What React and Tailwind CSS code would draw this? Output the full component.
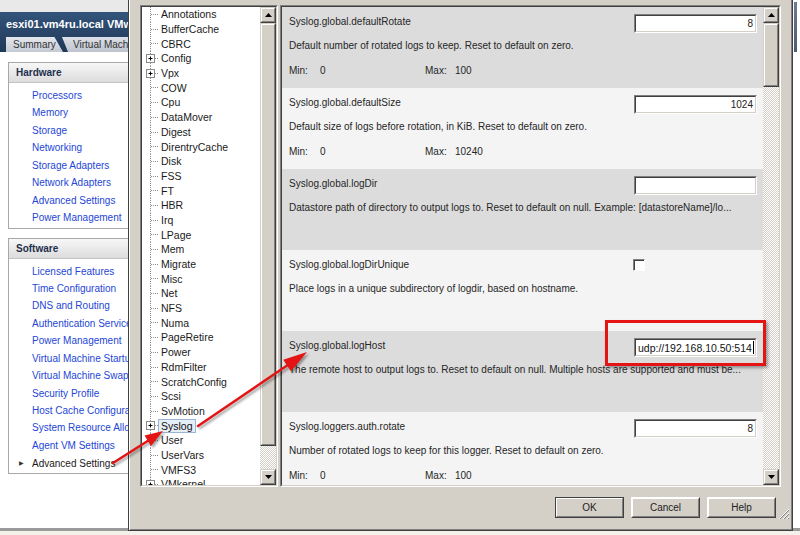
import React from "react";

const hardware = [
  "Processors",
  "Memory",
  "Storage",
  "Networking",
  "Storage Adapters",
  "Network Adapters",
  "Advanced Settings",
  "Power Management",
];

const software = [
  "Licensed Features",
  "Time Configuration",
  "DNS and Routing",
  "Authentication Services",
  "Power Management",
  "Virtual Machine Startup/Shutdown",
  "Virtual Machine Swapfile Location",
  "Security Profile",
  "Host Cache Configuration",
  "System Resource Allocation",
  "Agent VM Settings",
];

const treeItems = [
  ["Annotations"],
  ["BufferCache"],
  ["CBRC"],
  ["Config", true],
  ["Vpx", true],
  ["COW"],
  ["Cpu"],
  ["DataMover"],
  ["Digest"],
  ["DirentryCache"],
  ["Disk"],
  ["FSS"],
  ["FT"],
  ["HBR"],
  ["Irq"],
  ["LPage"],
  ["Mem"],
  ["Migrate"],
  ["Misc"],
  ["Net"],
  ["NFS"],
  ["Numa"],
  ["PageRetire"],
  ["Power"],
  ["RdmFilter"],
  ["ScratchConfig"],
  ["Scsi"],
  ["SvMotion"],
  ["Syslog", true, true],
  ["User"],
  ["UserVars"],
  ["VMFS3"],
  ["VMkernel", true],
];

const settings = [
  {
    name: "Syslog.global.defaultRotate",
    value: "8",
    desc: "Default number of rotated logs to keep. Reset to default on zero.",
    min: "0",
    max: "100",
    dark: true,
  },
  {
    name: "Syslog.global.defaultSize",
    value: "1024",
    desc: "Default size of logs before rotation, in KiB. Reset to default on zero.",
    min: "0",
    max: "10240",
  },
  {
    name: "Syslog.global.logDir",
    value: "",
    desc: "Datastore path of directory to output logs to. Reset to default on null. Example: [datastoreName]/lo...",
    dark: true,
  },
  {
    name: "Syslog.global.logDirUnique",
    checkbox: true,
    desc: "Place logs in a unique subdirectory of logdir, based on hostname.",
  },
  {
    name: "Syslog.global.logHost",
    value: "udp://192.168.10.50:514",
    left: true,
    desc: "The remote host to output logs to. Reset to default on null. Multiple hosts are supported and must be...",
    dark: true,
  },
  {
    name: "Syslog.loggers.auth.rotate",
    value: "8",
    desc: "Number of rotated logs to keep for this logger. Reset to default on zero.",
    min: "0",
    max: "100",
  },
];

function Sunken({ className = "", children }) {
  return (
    <div
      className={`border border-t-[#808080] border-l-[#808080] border-b-white border-r-white ${className}`}
    >
      <div className="flex h-full w-full border border-t-[#404040] border-l-[#404040] border-b-[#d4d0c8] border-r-[#d4d0c8]">
        {children}
      </div>
    </div>
  );
}

function ScrollButton({ down }) {
  return (
    <div className="h-[16px] w-[16px] shrink-0 border border-t-[#d4d0c8] border-l-[#d4d0c8] border-b-[#404040] border-r-[#404040] bg-[#d4d0c8]">
      <div className="flex h-full w-full items-center justify-center border border-t-white border-l-white border-b-[#808080] border-r-[#808080]">
        <svg width="7" height="4" viewBox="0 0 7 4">
          {down ? (
            <polygon points="0,0 7,0 3.5,4" fill="#000" />
          ) : (
            <polygon points="0,4 7,4 3.5,0" fill="#000" />
          )}
        </svg>
      </div>
    </div>
  );
}

function Thumb({ className = "" }) {
  return (
    <div
      className={`shrink-0 border border-t-[#d4d0c8] border-l-[#d4d0c8] border-b-[#404040] border-r-[#404040] bg-[#d4d0c8] ${className}`}
    >
      <div className="h-full w-full border border-t-white border-l-white border-b-[#808080] border-r-[#808080]" />
    </div>
  );
}

function Track({ className = "" }) {
  return (
    <div
      className={`bg-[image:repeating-conic-gradient(#d4d0c8_0%_25%,#ffffff_0%_50%)] bg-[length:2px_2px] ${className}`}
    />
  );
}

function TreeRow({ label, plus, selected }) {
  return (
    <div className="flex h-[14.7px] shrink-0 items-center overflow-hidden">
      <svg className="h-[14.7px] w-[19px] shrink-0" viewBox="0 0 19 14.7">
        <line x1="8.5" y1="0" x2="8.5" y2="14.7" stroke="#8a8a8a" strokeDasharray="1 1" />
        <line x1="9" y1="7.5" x2="17" y2="7.5" stroke="#8a8a8a" strokeDasharray="1 1" />
        {plus && (
          <>
            <rect x="4.5" y="3.5" width="8" height="8" fill="#fff" stroke="#8a8a8a" />
            <line x1="6.5" y1="7.5" x2="10.5" y2="7.5" stroke="#000" />
            <line x1="8.5" y1="5.5" x2="8.5" y2="9.5" stroke="#000" />
          </>
        )}
      </svg>
      {selected ? (
        <span className="-ml-[3px] border border-[#9cb4d4] bg-[#e6eef8] px-[2px] leading-[12px] text-[#111]">
          {label}
        </span>
      ) : (
        <span className="leading-[12px] text-[#1a1a1a]">{label}</span>
      )}
    </div>
  );
}

function Field({ value, left }) {
  return (
    <div className="h-[19px] w-[123px] border border-t-[#808080] border-l-[#808080] border-b-white border-r-white">
      <div
        className={`flex h-full w-full items-center border border-t-[#404040] border-l-[#404040] border-b-[#d4d0c8] border-r-[#d4d0c8] bg-white px-[2px] ${
          left ? "justify-start text-[10.5px] text-[#111]" : "justify-end text-[#222]"
        }`}
      >
        <span className="leading-[12px]">{value}</span>
        {left && <span className="ml-[1px] h-[13px] w-[1px] bg-black" />}
      </div>
    </div>
  );
}

function SettingRow({ s }) {
  return (
    <div
      className={`flex h-[81px] shrink-0 flex-col pl-[7px] pr-[6px] pt-[7px] text-[#262626] ${
        s.dark ? "bg-[#dcdcdc]" : "bg-[#f4f4f4]"
      }`}
    >
      <div className="flex h-[19px] items-start justify-between">
        <span className="pt-[2px] leading-[12px]">{s.name}</span>
        {s.checkbox ? (
          <div className="mr-[112px] mt-[2px] h-[12px] w-[12px] border border-t-[#808080] border-l-[#808080] border-b-white border-r-white bg-white shadow-[inset_1px_1px_0_#404040]" />
        ) : (
          <Field value={s.value} left={s.left} />
        )}
      </div>
      <div className="mt-[7px] overflow-hidden whitespace-nowrap leading-[12px]">{s.desc}</div>
      {s.min && (
        <div className="mt-[13px] flex leading-[12px]">
          <span className="w-[31px]">Min:</span>
          <span className="w-[105px]">{s.min}</span>
          <span className="w-[30px]">Max:</span>
          <span>{s.max}</span>
        </div>
      )}
    </div>
  );
}

function Button({ label, primary }) {
  return (
    <div
      className={`h-[21px] w-[69px] border ${
        primary ? "border-[#404040]" : "border-t-white border-l-white border-b-[#404040] border-r-[#404040]"
      } bg-[#d4d0c8]`}
    >
      <div className="flex h-full w-full items-center justify-center border border-t-[#ffffff] border-l-[#ffffff] border-b-[#808080] border-r-[#808080] text-[#222]">
        {label}
      </div>
    </div>
  );
}

function NavBox({ title, items, last }) {
  return (
    <div className="w-[140px] border border-[#a8a8a8] bg-white">
      <div className="flex h-[20px] items-center border-b border-[#c4c4c4] bg-linear-to-b from-[#f8f8f8] to-[#dcdcdc] pl-[7px] font-bold text-[#1e2f4c]">
        {title}
      </div>
      <div className="flex flex-col pb-[1px] pt-[4px]">
        {items.map((it, i) => (
          <div key={i} className="h-[17.45px] whitespace-nowrap pl-[23px] leading-[17px] text-[#2446d6]">
            {it}
          </div>
        ))}
        {last && (
          <div className="flex h-[17.45px] items-center whitespace-nowrap pl-[10px] leading-[17px] text-[#1a1a1a]">
            <span className="w-[13px] text-[6px] text-[#333]">▶</span>
            {last}
          </div>
        )}
      </div>
    </div>
  );
}

export default function App() {
  return (
    <div className="relative h-[535px] w-[800px] overflow-hidden bg-[#f3f1ea] font-['Liberation_Sans',Arial,sans-serif] text-[10px]">
      {/* vSphere client window behind the dialog */}
      <div className="flex h-[531px] w-[800px] border-b-[3px] border-[#9a9a9a] bg-white">
        <div className="flex w-[793px] flex-col">
          <div className="h-[12px] bg-[#e9e9e9]" />
          <div className="flex h-[40px] flex-col bg-linear-to-b from-[#34547a] to-[#1f3858]">
            <div className="h-[25px] whitespace-nowrap pl-[6px] text-[11px] font-bold leading-[25px] text-white">
              esxi01.vm4ru.local VMware ESXi
            </div>
            <div className="flex h-[15px] items-end pl-[6px]">
              <div className="flex h-[15px] w-[57px] items-center bg-linear-to-b from-[#e4e8ee] to-[#c4cad4] pl-[7px] text-[#333] [clip-path:polygon(0_0,85%_0,100%_100%,0_100%)]">
                Summary
              </div>
              <div className="-ml-[1px] flex h-[15px] w-[120px] items-center whitespace-nowrap bg-linear-to-b from-[#dde1e8] to-[#bec4ce] pl-[11px] text-[#333] [clip-path:polygon(0_0,95%_0,100%_100%,5%_100%)]">
                Virtual Machines
              </div>
            </div>
          </div>
          <div className="flex flex-col gap-[9px] pl-[8px] pt-[10px]">
            <NavBox title="Hardware" items={hardware} />
            <NavBox title="Software" items={software} last="Advanced Settings" />
          </div>
        </div>
        <div className="flex w-[7px] flex-col bg-white pl-[1px] pt-[2px]">
          <div className="h-[50px] w-[3px] bg-linear-to-b from-[#6d7c92] to-[#4a5a72]" />
        </div>
      </div>

      {/* Advanced Settings dialog */}
      <div className="absolute left-[128px] top-0 flex h-[531px] w-[665px] flex-col border-x border-b border-[#404040] bg-[#d4d0c8] pl-[11px] pr-[11px] pt-[5px] shadow-[inset_1px_0_0_#fff,inset_-1px_-1px_0_#808080]">
        <div className="flex h-[482px] gap-[2px]">
          {/* tree */}
          <Sunken className="h-[482px] w-[138px]">
            <div className="flex flex-1 flex-col overflow-hidden bg-white text-[10.5px]">
              {treeItems.map(([label, plus, selected]) => (
                <TreeRow key={label} label={label} plus={plus} selected={selected} />
              ))}
            </div>
            <div className="flex w-[16px] flex-col bg-[#d4d0c8]">
              <ScrollButton />
              <Thumb className="h-[423px]" />
              <Track className="flex-1" />
              <ScrollButton down />
            </div>
          </Sunken>

          {/* settings list */}
          <Sunken className="h-[482px] w-[501px]">
            <div className="flex flex-1 flex-col overflow-hidden">
              {settings.map((s) => (
                <SettingRow key={s.name} s={s} />
              ))}
            </div>
            <div className="flex w-[16px] flex-col bg-[#d4d0c8]">
              <ScrollButton />
              <Thumb className="h-[64px]" />
              <Track className="flex-1" />
              <ScrollButton down />
            </div>
          </Sunken>
        </div>

        <div className="mt-[10px] flex justify-end gap-[7px] pr-[5px]">
          <Button label="OK" primary />
          <Button label="Cancel" />
          <Button label="Help" />
        </div>

        <svg className="absolute bottom-[10px] right-[2px]" width="12" height="12" viewBox="0 0 12 12">
          <line x1="11" y1="1" x2="1" y2="11" stroke="#fff" />
          <line x1="11" y1="2" x2="2" y2="11" stroke="#808080" />
          <line x1="11" y1="5" x2="5" y2="11" stroke="#fff" />
          <line x1="11" y1="6" x2="6" y2="11" stroke="#808080" />
          <line x1="11" y1="9" x2="9" y2="11" stroke="#fff" />
          <line x1="11" y1="10" x2="10" y2="11" stroke="#808080" />
        </svg>
      </div>

      {/* annotation: red box */}
      <div className="pointer-events-none absolute left-[605px] top-[320px] h-[46px] w-[161px] border-[3px] border-[#e41414] shadow-[2px_2px_3px_rgba(0,0,0,0.35)]" />

      {/* annotation: arrows */}
      <svg
        className="pointer-events-none absolute left-0 top-0 drop-shadow-[2px_2px_1px_rgba(0,0,0,0.35)]"
        width="800"
        height="535"
        viewBox="0 0 800 535"
      >
        <line x1="113" y1="463" x2="150" y2="439.5" stroke="#e41414" strokeWidth="2.5" strokeLinecap="round" />
        <polygon points="163,431 151,446 144.6,435.6" fill="#e41414" />
        <line x1="198" y1="426" x2="290" y2="363.5" stroke="#e41414" strokeWidth="2.5" strokeLinecap="round" />
        <polygon points="307,352 291,371.3 283.2,359.7" fill="#e41414" />
      </svg>
    </div>
  );
}
